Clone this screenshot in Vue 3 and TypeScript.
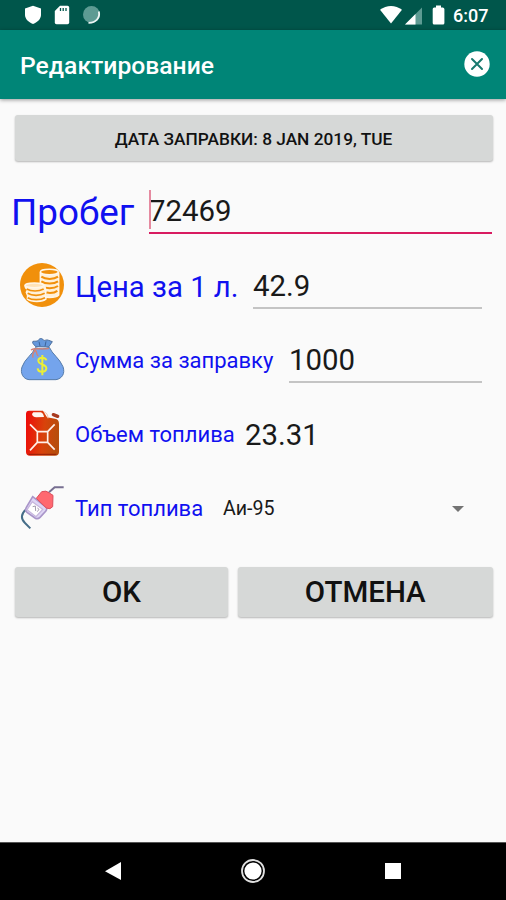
<script setup lang="ts">
import { ref } from 'vue'

const mileage = ref('72469')
const price = ref('42.9')
const total = ref('1000')
const volume = ref('23.31')
const fuel = ref('Аи-95')
const date = ref('8 JAN 2019, TUE')
</script>

<template>
  <div class="screen">
    <header class="status">
      <div class="status-left">
        <svg width="18" height="20" viewBox="0 0 18 20"><path d="M9 .8 17 3.6v6.2c0 4-3.2 7.400-8 9.200-4.800-1.800-8-5.200-8-9.200V3.600z" fill="#fff" /></svg>
        <svg width="16" height="20" viewBox="0 0 16 20"><path d="M6 .8h7.500a1.700 1.700 0 0 1 1.700 1.700v15a1.700 1.700 0 0 1-1.700 1.700h-11a1.700 1.700 0 0 1-1.700-1.700V6z" fill="#fff" /><path d="M6.500 3v3M9.200 3v3M12 3v3" stroke="#00564b" stroke-width="1.300" /></svg>
        <svg width="20" height="20" viewBox="0 0 20 20"><circle cx="9.500" cy="9.500" r="8.500" fill="#5d9b93" /><path d="M16.800 6.500c1.600 6-2.800 11.500-10.300 11.300" fill="none" stroke="#eef6f5" stroke-width="1.800" /></svg>
      </div>
      <div class="status-right">
        <svg class="wifi" width="22" height="20" viewBox="0 0 22 20"><path d="M0 4.800C6.500-.4 15.500-.4 22 4.800L11 18.500z" fill="#fff" /></svg>
        <svg class="signal" width="18" height="20" viewBox="0 0 18 20"><path d="M0 19.500 17 2.500v17z" fill="#5d9b93" /><path d="M0 19.500 10.500 9v10.500z" fill="#fff" /></svg>
        <svg class="battery" width="13" height="20" viewBox="0 0 13 20"><path d="M4 .5h5v2h1.700A1.700 1.700 0 0 1 12.400 4v14a1.500 1.500 0 0 1-1.500 1.500H2.200A1.500 1.500 0 0 1 .7 18V4a1.500 1.500 0 0 1 1.500-1.500H4z" fill="#fff" /></svg>
        <span class="clock">6:07</span>
      </div>
    </header>

    <div class="appbar">
      <h1>Редактирование</h1>
      <svg width="26" height="26" viewBox="0 0 26 26"><circle cx="13" cy="13" r="12.700" fill="#fff" /><path d="m8 8 10 10M18 8 8 18" stroke="#17796e" stroke-width="2" stroke-linecap="round" /></svg>
    </div>

    <main>
      <button class="btn date"><span>ДАТА ЗАПРАВКИ: {{ date }}</span></button>

      <div class="row mileage">
        <span class="label big">Пробег</span>
        <div class="field focused"><i class="caret"></i><span class="value">{{ mileage }}</span></div>
      </div>

      <div class="row">
        <svg class="icon" viewBox="24 18 150 150">
          <circle cx="96" cy="90" r="66" fill="#f1900b" />
          <g fill="#f1900b" stroke="#fff6e8" stroke-width="4.500">
            <path d="M91 52v68c8 10 47 10 55 0V52" fill="#fff0d8" />
            <g stroke="#f1900b" stroke-width="6" fill="none"><path d="M94 65c12 9 38 9 50 0M94 79c12 9 38 9 50 0M94 93c12 9 38 9 50 0M96 107c12 9 36 9 46 0" /></g>
            <ellipse cx="118" cy="51" rx="27" ry="8" />
            <path d="M45 91c0 8 4 11 8 13l-4 8 4 10-1 10c12 10 46 10 56 0l-3-13 3-9-4-19" fill="#fff0d8" />
            <g stroke="#f1900b" stroke-width="5" fill="none"><path d="M50 102c14 8 36 8 51 0M53 115c13 8 37 8 51 0M53 128c13 8 38 8 52 0" /></g>
            <ellipse cx="73" cy="91" rx="28" ry="7" fill="#ffe3b8" />
          </g>
        </svg>
        <span class="label medium">Цена за 1 л.</span>
        <div class="field"><span class="value">{{ price }}</span></div>
      </div>

      <div class="row">
        <svg class="icon" viewBox="24 15 150 150">
          <path d="M77 53c-6-7-12-12-8-16 6-1 12 1 16-3 4-7 11-7 15-1 4 4 10-3 16 1l11 4-11 16z" transform="translate(0 -3)" fill="#6598dc" stroke="#4e6f9b" stroke-width="3" />
          <path d="M76 53c12 5 29 5 42-1 8 20 31 33 41 58 7 21-3 36-21 39H57c-18-2-27-20-21-38 8-25 32-37 40-58z" fill="#74a4ec" stroke="#557ba9" stroke-width="3" />
          <path d="m87 35 3 13m18-14-3 15" stroke="#3e659a" stroke-width="3" />
          <path d="M63 60c12-8 34 0 54-5M75 59c-2 10-10 10-6 24m7-22c7 5 1 13 9 17" fill="none" stroke="#d78273" stroke-width="4" />
          <path d="M97 75v61M109 91c-2-10-23-11-24 0-1 15 26 10 24 25-2 13-25 12-26-1" fill="none" stroke="#ebef36" stroke-width="6" />
        </svg>
        <span class="label small sum">Сумма за заправку</span>
        <div class="field"><span class="value">{{ total }}</span></div>
      </div>

      <div class="row">
        <svg class="icon" viewBox="24 27 150 150">
          <defs><linearGradient id="can" x1="0" x2="1" y1="0" y2=".15"><stop offset="0" stop-color="#ef0909" /><stop offset=".6" stop-color="#d8430b" /><stop offset="1" stop-color="#b84d0c" /></linearGradient></defs>
          <path d="M57 32h42l12 20 24 4q12 2 12 15v85q0 11-12 11H60q-12 0-12-11V42q0-10 9-10z" fill="url(#can)" />
          <path d="M70 37h22q8 2 10 14l-23 1q-12-1-13-10z" fill="#fff5ee" />
          <path d="M102 36q12 3 12 19" fill="none" stroke="#f5c5a8" stroke-width="3" />
          <path d="m130 44 13 5" stroke="#a83a20" stroke-width="10" stroke-linecap="round" />
          <path d="M60 73 82 95m31 0 21-22M82 127l-22 24m53-24 21 22M82 95h31v32H82z" fill="none" stroke="#fff0e9" stroke-width="5" />
          <path d="M56 163h83" stroke="#941d08" stroke-width="3" />
        </svg>
        <span class="label small volume">Объем топлива</span>
        <span class="value result">{{ volume }}</span>
      </div>

      <div class="row">
        <svg class="icon" viewBox="24 24 150 150">
          <path d="m117 52 17-15h27" fill="none" stroke="#776f91" stroke-width="6" />
          <path d="M49 103c-17 14-17 29-4 41l16 16" fill="none" stroke="#456d88" stroke-width="6" />
          <path d="M68 65 109 97q3 5-2 12l-17 18q-7 7-15 2l-24-17q-7-6-2-15z" fill="#ded5f4" stroke="#a995c9" stroke-width="5" />
          <path d="m67 80 31 23-20 22-27-21z" fill="#fff" stroke="#c6b6dd" stroke-width="4" />
          <path d="m79 70 16-20q14-5 23 4l11 7-1 34q-7 10-19 4z" fill="#ff6870" stroke="#dc4e5c" stroke-width="3" />
          <path d="m68 95 8-2 1 15m5-9 5 4-5 7" fill="none" stroke="#91879d" stroke-width="2.500" />
        </svg>
        <span class="label small type">Тип топлива</span>
        <div class="select"><span>{{ fuel }}</span><i class="arrow"></i></div>
      </div>

      <div class="actions">
        <button class="btn ok"><span>OK</span></button>
        <button class="btn cancel"><span>ОТМЕНА</span></button>
      </div>
    </main>

    <nav>
      <svg width="18" height="20" viewBox="0 0 18 20"><path d="M0 10.200 16 1v18z" fill="#fff" /></svg>
      <svg width="26" height="26" viewBox="0 0 26 26"><circle cx="13" cy="13" r="11" fill="none" stroke="#e0e0e0" stroke-width="1.800" /><circle cx="13" cy="13" r="8.600" fill="#fff" /></svg>
      <svg width="18" height="18" viewBox="0 0 18 18"><path d="M1 1h16v16H1z" fill="#fff" /></svg>
    </nav>
  </div>
</template>

<style>
body { margin: 0; }
</style>

<style scoped>
* { box-sizing: border-box; }
.screen { width: 506px; height: 900px; display: flex; flex-direction: column; overflow: hidden; background: #fafafa; font-family: Roboto, sans-serif; color: #191919; }
svg { display: block; flex: none; }
.status { height: 30px; flex: none; background: #00564b; display: flex; justify-content: space-between; padding: 5px 18px 0 24px; }
.status-left { display: flex; gap: 12px; }
.status-right { display: flex; }
.wifi { margin-right: 1px; }
.signal { margin-left: 2px; }
.battery { margin-left: 9px; }
.clock { margin-left: 8px; width: 35px; color: #fff; font-size: 18px; line-height: 22px; font-weight: 500; white-space: nowrap; }
.appbar { height: 69px; flex: none; background: #008577; color: #fff; display: flex; justify-content: space-between; align-items: center; padding: 0 16px 0 20px; box-shadow: 0 1px 4px rgba(0, 0, 0, .4); }
.appbar svg { margin-bottom: 1px; }
h1 { margin: 0; padding-top: 3px; font-size: 24.700px; line-height: 30px; font-weight: 500; white-space: nowrap; }
main { flex: 1; padding: 16px 13px 0 14px; display: flex; flex-direction: column; }
.btn { border: 0; padding: 0; border-radius: 3px; background: #d6d8d7; box-shadow: 0 1px 2px rgba(0, 0, 0, .28); font-family: inherit; font-weight: 500; color: #111; white-space: nowrap; }
.date { width: 478px; margin-left: .5px; height: 46px; font-size: 17.300px; }
.date span { position: relative; top: 1px; }
.row { height: 74px; flex: none; display: flex; align-items: center; padding: 0 11px 0 4px; }
.mileage { margin-top: 14px; padding: 0 1px 0 0; }
.icon { width: 50px; height: 50px; margin-right: 7px; }
.label { flex: none; color: #1010f0; white-space: nowrap; }
.big { width: 138px; margin-left: -3px; font-size: 36.800px; }
.medium { width: 178px; font-size: 29.300px; padding-top: 1px; }
.small { font-size: 22px; }
.sum { width: 214px; }
.volume { width: 170px; }
.type { width: 148px; }
.field { flex: 1; height: 44px; margin-top: 2px; border-bottom: 2px solid #c4c4c4; display: flex; align-items: center; position: relative; }
.focused { margin-top: 0; border-bottom-color: #d81b60; }
.value { font-size: 29.400px; line-height: 34px; }
.result { padding-top: 1px; }
.caret { position: absolute; left: 0; top: 0; width: 2px; height: 39px; background: #e58aa0; }
.select { flex: 1; display: flex; align-items: center; justify-content: space-between; font-size: 19.600px; padding: 1px 18px 0 0; }
.arrow { border: 6px solid transparent; border-top-color: #737373; border-bottom: 0; }
.actions { display: flex; gap: 10px; margin: 22px 0 0 .5px; }
.actions .btn { height: 50px; font-size: 29.500px; }
.ok { width: 213px; }
.ok span { margin-left: 1px; }
.cancel { flex: 1; }
nav { height: 58px; flex: none; background: #000; border-top: 1px solid #555; display: flex; align-items: center; justify-content: space-between; padding: 0 104px 2px 105px; }
nav svg:nth-child(2) { margin-left: -1px; }
</style>
